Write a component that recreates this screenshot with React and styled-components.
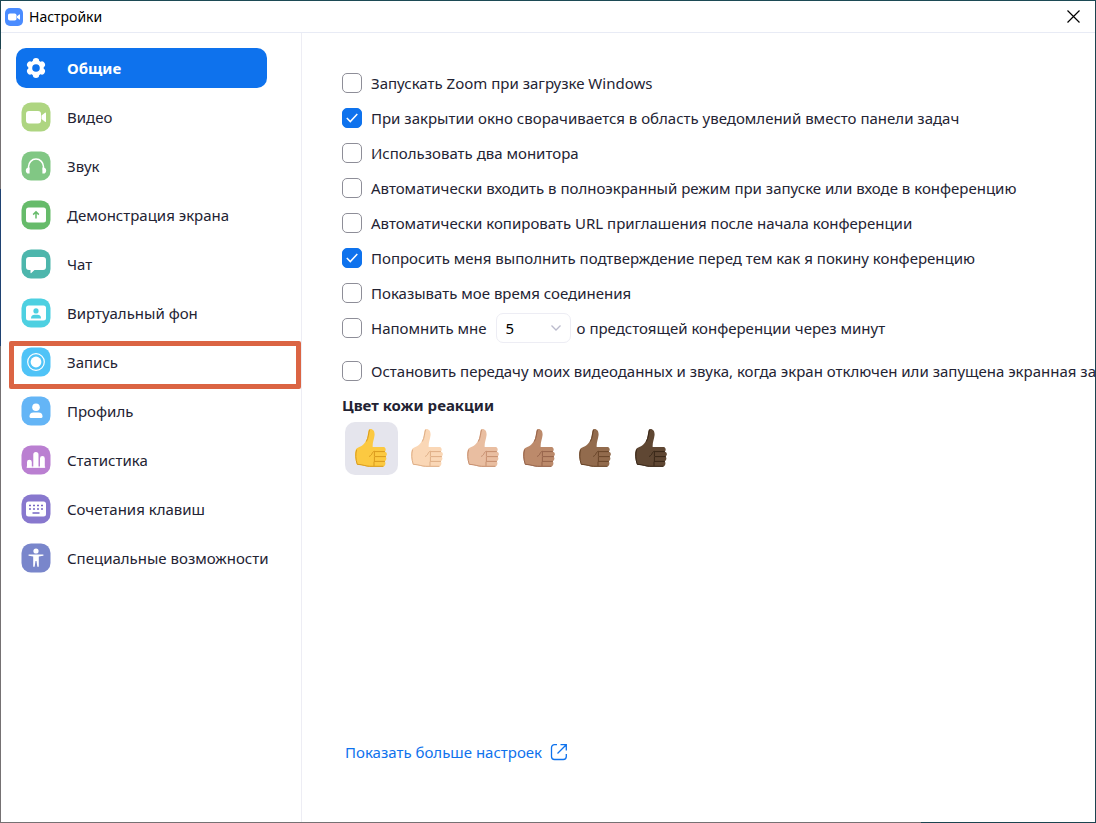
import React, { useState } from "react";
import styled, { createGlobalStyle, css } from "styled-components";

const GlobalStyle = createGlobalStyle`
  *, *::before, *::after { box-sizing: border-box; }
  body {
    margin: 0;
    background: #ffffff;
    color: #232333;
    font-family: "Noto Sans", "Open Sans", sans-serif;
    font-size: 15px;
    line-height: 20px;
  }
  button, select, input { font: inherit; color: inherit; }
  svg { flex: none; }
`;

const Frame = styled.div`
  display: flex;
  min-height: 100vh;
  padding: 1px;
  background:
    linear-gradient(#1c4a55, #1c4a55) top / 100% 1px no-repeat,
    linear-gradient(#1c4450, #1c4450) right / 1px 100% no-repeat,
    linear-gradient(90deg, #757173 84%, #1c4450 84%) bottom / 100% 1px no-repeat,
    linear-gradient(#1c4450 6%, #757173 6% 23%, #1f4272 23% 42%, #757173 42%) left / 1px 100% no-repeat;
`;

const Window = styled.div`
  flex: 1;
  min-width: 0;
  display: flex;
  flex-direction: column;
  background: #ffffff;
`;

const TitleBar = styled.header`
  display: flex;
  align-items: center;
  gap: 6px;
  height: 32px;
  padding: 0 12px 0 4px;
  border-bottom: 1px solid #e8ebf5;
  color: #000000;
`;

const Title = styled.h1`
  flex: 1;
  margin: 0;
  font-size: 14px;
  font-weight: 400;
`;

const CloseButton = styled.button`
  display: flex;
  padding: 3px;
  border: 0;
  background: none;
  color: #000000;
`;

const Body = styled.div`
  flex: 1;
  display: flex;
  min-height: 0;
`;

const Sidebar = styled.nav`
  flex: none;
  width: 301px;
  padding: 15px 34px 15px 15px;
  border-right: 1px solid #ededf4;
`;

const NavList = styled.ul`
  display: flex;
  flex-direction: column;
  gap: 9px;
  margin: 0;
  padding: 0;
  list-style: none;
`;

const NavItem = styled.li`
  position: relative;
`;

const NavButton = styled.button`
  display: flex;
  align-items: center;
  gap: 16px;
  width: 100%;
  height: 40px;
  padding: 0 0 0 5px;
  border: 0;
  border-radius: 10px;
  background: none;
  text-align: left;
  white-space: nowrap;
  ${({ $active }) => $active && css`
    background: #0e72ed;
    color: #ffffff;
    font-weight: 700;
  `}
`;

const Highlight = styled.span`
  position: absolute;
  inset: -1px -34px -7px -7px;
  border: 5px solid #db6443;
  border-radius: 2px;
  pointer-events: none;
`;

const Content = styled.main`
  flex: 1;
  min-width: 0;
  display: flex;
  flex-direction: column;
  align-items: flex-start;
  overflow: hidden;
  padding: 32px 0 60px 40px;
`;

const Options = styled.div`
  display: flex;
  flex-direction: column;
`;

const OptionRow = styled.div`
  display: flex;
  align-items: center;
  gap: 9px;
  height: 35px;
  white-space: nowrap;
  margin-top: ${({ $spaced }) => ($spaced ? "8px" : "0")};
`;

const CheckBox = styled.span`
  display: grid;
  width: 20px;
  height: 20px;
  > * { grid-area: 1 / 1; }
  > svg { pointer-events: none; }
`;

const CheckInput = styled.input`
  appearance: none;
  width: 20px;
  height: 20px;
  margin: 0;
  border: 1px solid #8e8e98;
  border-radius: 5px;
  background: #ffffff;
  &:checked {
    border-color: #0e72ed;
    background: #0e72ed;
  }
`;

const SelectBox = styled.span`
  display: grid;
  width: 75px;
  margin: 0 -3px 0 0;
  > * { grid-area: 1 / 1; }
  > svg {
    place-self: center end;
    margin-right: 9px;
    pointer-events: none;
  }
`;

const Select = styled.select`
  appearance: none;
  width: 100%;
  height: 30px;
  padding: 0 24px 0 9px;
  border: 1px solid #ededf4;
  border-radius: 7px;
  background: #ffffff;
  color: #000000;
`;

const SkinTones = styled.fieldset`
  margin: 0;
  padding: 0;
  border: 0;
`;

const SkinLegend = styled.legend`
  padding: 0;
  font-weight: 700;
  line-height: 34px;
`;

const Swatches = styled.div`
  display: flex;
  gap: 3px;
  padding-left: 3px;
`;

const Swatch = styled.label`
  display: grid;
  place-items: center;
  width: 53px;
  height: 53px;
  border-radius: 10px;
  background: ${({ $active }) => ($active ? "#e5e5ed" : "transparent")};
  > * { grid-area: 1 / 1; }
`;

const SwatchInput = styled.input`
  appearance: none;
  width: 100%;
  height: 100%;
  margin: 0;
`;

const MoreLink = styled.a`
  display: flex;
  align-items: center;
  gap: 8px;
  margin: auto 0 0 3px;
  color: #0e72ed;
  text-decoration: none;
  white-space: nowrap;
`;

function Tile({ color, children }) {
  return (
    <svg width="30" height="30" viewBox="0 0 30 30" fill="#fff" aria-hidden="true">
      <rect x="0.5" y="0.5" width="29" height="29" rx="9.5" fill={color} />
      {children}
    </svg>
  );
}

const petals = [0, 60, 120, 180, 240, 300];

const icons = {
  general: (
    <svg width="30" height="30" viewBox="0 0 30 30" aria-hidden="true">
      <g fill="#fff">
        <circle cx="15" cy="15" r="7.7" />
        {petals.map((a) => (
          <circle key={a} cx="15" cy="8.300" r="3.200" transform={`rotate(${a} 15 15)`} />
        ))}
      </g>
      <circle cx="15" cy="15" r="3.800" fill="#0e72ed" />
    </svg>
  ),
  video: (
    <Tile color="#aed581">
      <rect x="5" y="9" width="15" height="12.5" rx="3" />
      <path d="M20.5 13.6 24 10.8q1-.7 1 .5v8q0 1.200-1 .5l-3.500-2.800z" />
    </Tile>
  ),
  audio: (
    <Tile color="#81c784">
      <path d="M7.500 19v-3.200a7.500 7.700 0 0 1 15 0V19" fill="none" stroke="#fff" strokeWidth="1.500" />
      <path d="M8.600 16.500v5.900c-2.300.6-3.800-.9-3.800-3 0-1.900 1.600-3.200 3.800-2.900zM21.400 16.500v5.900c2.300.6 3.800-.9 3.800-3 0-1.900-1.600-3.200-3.800-2.900z" />
    </Tile>
  ),
  share: (
    <Tile color="#66bb6a">
      <rect x="5" y="7.500" width="20" height="15" rx="2.500" />
      <path d="M15 18.500v-6.500M12.200 14.600 15 11.800l2.800 2.800" fill="none" stroke="#66bb6a" strokeWidth="1.500" />
    </Tile>
  ),
  chat: (
    <Tile color="#4db6ac">
      <path d="M8 8h14a3 3 0 0 1 3 3v7a3 3 0 0 1-3 3h-8.500l-3.200 3q-.8.600-.8-.4V21H8a3 3 0 0 1-3-3v-7a3 3 0 0 1 3-3z" />
    </Tile>
  ),
  background: (
    <Tile color="#4dd0e1">
      <rect x="5" y="7.500" width="20" height="15" rx="2.500" />
      <circle cx="15" cy="12.900" r="2.600" fill="#4dd0e1" />
      <path d="M10 20.500q0-3.700 3.500-3.700h3q3.500 0 3.500 3.700z" fill="#4dd0e1" />
    </Tile>
  ),
  recording: (
    <Tile color="#4fc3f7">
      <circle cx="15" cy="15" r="8.300" fill="none" stroke="#fff" strokeWidth="1.200" />
      <circle cx="15" cy="15" r="5.400" />
    </Tile>
  ),
  profile: (
    <Tile color="#64b5f6">
      <circle cx="15" cy="11.200" r="3.800" />
      <path d="M8.500 20.500q0-4 4-4h5q4 0 4 4 0 1.500-1.500 1.500H10q-1.500 0-1.500-1.500z" />
    </Tile>
  ),
  statistics: (
    <Tile color="#ba7fd1">
      <path d="M6 22.500v-5.400a2.400 2.400 0 0 1 4.800 0v5.400zM12.300 22.500v-13a2.600 2.600 0 0 1 5.200 0v13zM19 22.500v-9a2.400 2.400 0 0 1 4.800 0v9z" />
      <rect x="5.500" y="21.500" width="18.800" height="1.200" rx=".6" />
    </Tile>
  ),
  keyboard: (
    <Tile color="#8878ce">
      <rect x="5" y="7.500" width="20" height="15" rx="2.500" />
      <path d="M8 11.500h2m2 0h2m2 0h2m2 0h2M8 15h2m2 0h2m2 0h2m2 0h2M11.500 19h7" stroke="#7566c4" strokeWidth="1.500" />
    </Tile>
  ),
  accessibility: (
    <Tile color="#7986cb">
      <circle cx="15" cy="8" r="2.600" />
      <path d="M8 11.500h14q.8.200.5.900l-.4.300-4.300.7v10.200q-.8.900-1.500 0l-.8-5.600h-1l-.8 5.600q-.7.900-1.500 0V13.400l-4.300-.7-.4-.3q-.3-.7.500-.9z" />
    </Tile>
  ),
};

const sections = [
  ["general", "Общие"],
  ["video", "Видео"],
  ["audio", "Звук"],
  ["share", "Демонстрация экрана"],
  ["chat", "Чат"],
  ["background", "Виртуальный фон"],
  ["recording", "Запись"],
  ["profile", "Профиль"],
  ["statistics", "Статистика"],
  ["keyboard", "Сочетания клавиш"],
  ["accessibility", "Специальные возможности"],
];

const options = [
  ["startup", "Запускать Zoom при загрузке Windows", false],
  ["tray", "При закрытии окно сворачивается в область уведомлений вместо панели задач", true],
  ["monitors", "Использовать два монитора", false],
  ["fullscreen", "Автоматически входить в полноэкранный режим при запуске или входе в конференцию", false],
  ["copyurl", "Автоматически копировать URL приглашения после начала конференции", false],
  ["confirm", "Попросить меня выполнить подтверждение перед тем как я покину конференцию", true],
  ["time", "Показывать мое время соединения", false],
];

const tones = [
  ["Стандартный", "#fcc941", "#d99a1c"],
  ["Светлый", "#fad7b6", "#deae86"],
  ["Умеренно светлый", "#e9bea1", "#c68f6f"],
  ["Средний", "#bc8a6b", "#95634a"],
  ["Умеренно темный", "#926b4d", "#684529"],
  ["Темный", "#5f4733", "#382718"],
];

function AppLogo() {
  return (
    <svg width="18" height="18" viewBox="0 0 18 18" aria-hidden="true">
      <rect width="18" height="18" rx="5" fill="#4a8cff" />
      <rect x="3" y="5.500" width="8.500" height="7" rx="1.800" fill="#fff" />
      <path d="M12 8.200 14.300 6.400q.7-.4.700.3v4.600q0 .7-.7.300L12 9.800z" fill="#fff" />
    </svg>
  );
}

function Thumb({ fill, shade }) {
  return (
    <svg width="33" height="39" viewBox="0 0 33 39" aria-hidden="true">
      <path
        d="M15.500 0c3 0 4.500 3.200 4 6.600-.4 3.600-2.200 7.400-1.800 11.400h11c2.500.4 2.500 4 .8 4.600 3 .7 3 4.200.7 4.900 1.800.8 1.500 4-.5 4.700 1.400 1.300.7 5.300-1.700 5.500H15c-4 0-6-1.700-12.700-2C.5 31.500-.8 25.500.8 21c1-3 4.500-2.500 7.500-5.400C12.500 11.700 12.500 7.500 13.300 2.500 13.600.8 14.200 0 15.500 0z"
        fill={fill}
      />
      <path
        d="M1.500 21C.3 25 .6 30 2.200 35.300c6 .3 8.500 2 12.500 2H28M19.500 22.600h10M20 27.600h10.500M19.500 32.400h10M19.400 23.200v3.600M19.400 28v4M19 33v3.500M19 22.300c-2.800 1.200-1 3.300-4.500 5M14.500 1c-1 2.500-.8 7.500-3 11.200"
        fill="none"
        stroke={shade}
        strokeWidth="1"
        strokeLinecap="round"
      />
    </svg>
  );
}

function Check({ id, checked, onToggle }) {
  return (
    <CheckBox>
      <CheckInput type="checkbox" id={id} checked={checked} onChange={onToggle} />
      {checked && (
        <svg width="20" height="20" viewBox="0 0 20 20" fill="none" stroke="#fff" strokeWidth="1.500" aria-hidden="true">
          <path d="m4.800 10 3.500 3.600 7-7.600" />
        </svg>
      )}
    </CheckBox>
  );
}

export default function App() {
  const [active, setActive] = useState("general");
  const [tone, setTone] = useState("Стандартный");
  const [checks, setChecks] = useState(() => Object.fromEntries(options.map(([id, , on]) => [id, on])));
  const check = (id) => (
    <Check id={id} checked={!!checks[id]} onToggle={() => setChecks((c) => ({ ...c, [id]: !c[id] }))} />
  );

  return (
    <>
      <GlobalStyle />
      <Frame>
        <Window>
          <TitleBar>
            <AppLogo />
            <Title>Настройки</Title>
            <CloseButton type="button" aria-label="Закрыть">
              <svg width="13" height="13" viewBox="0 0 13 13" stroke="currentColor" strokeWidth="1.200" aria-hidden="true">
                <path d="m.5.5 12 12m0-12-12 12" />
              </svg>
            </CloseButton>
          </TitleBar>
          <Body>
            <Sidebar>
              <NavList>
                {sections.map(([id, label]) => (
                  <NavItem key={id}>
                    <NavButton type="button" $active={active === id} onClick={() => setActive(id)}>
                      {icons[id]}
                      {label}
                    </NavButton>
                    {id === "recording" && <Highlight />}
                  </NavItem>
                ))}
              </NavList>
            </Sidebar>
            <Content>
              <Options>
                {options.map(([id, label]) => (
                  <OptionRow key={id}>
                    {check(id)}
                    <label htmlFor={id}>{label}</label>
                  </OptionRow>
                ))}
                <OptionRow>
                  {check("remind")}
                  <label htmlFor="remind">Напомнить мне</label>
                  <SelectBox>
                    <Select id="minutes" defaultValue="5">
                      <option>5</option>
                      <option>10</option>
                      <option>15</option>
                    </Select>
                    <svg width="12" height="8" viewBox="0 0 12 8" fill="none" stroke="#babacc" strokeWidth="1.300" aria-hidden="true">
                      <path d="m1.500 1.500 4.500 4.500 4.500-4.500" />
                    </svg>
                  </SelectBox>
                  <label htmlFor="minutes">о предстоящей конференции через минут</label>
                </OptionRow>
                <OptionRow $spaced>
                  {check("screensaver")}
                  <label htmlFor="screensaver">
                    Остановить передачу моих видеоданных и звука, когда экран отключен или запущена экранная заставка
                  </label>
                </OptionRow>
              </Options>
              <SkinTones>
                <SkinLegend>Цвет кожи реакции</SkinLegend>
                <Swatches>
                  {tones.map(([name, fill, shade]) => (
                    <Swatch key={name} $active={tone === name}>
                      <SwatchInput
                        type="radio"
                        name="tone"
                        aria-label={name}
                        checked={tone === name}
                        onChange={() => setTone(name)}
                      />
                      <Thumb fill={fill} shade={shade} />
                    </Swatch>
                  ))}
                </Swatches>
              </SkinTones>
              <MoreLink href="#more">
                Показать больше настроек
                <svg width="18" height="18" viewBox="0 0 18 18" fill="none" stroke="currentColor" strokeWidth="1.300" aria-hidden="true">
                  <path d="M7 1.700H4.500a3 3 0 0 0-3 3v8.800a3 3 0 0 0 3 3h8.800a3 3 0 0 0 3-3V11M10.500 1.700h5.800v5.800M16 2 7.500 10.500" />
                </svg>
              </MoreLink>
            </Content>
          </Body>
        </Window>
      </Frame>
    </>
  );
}
